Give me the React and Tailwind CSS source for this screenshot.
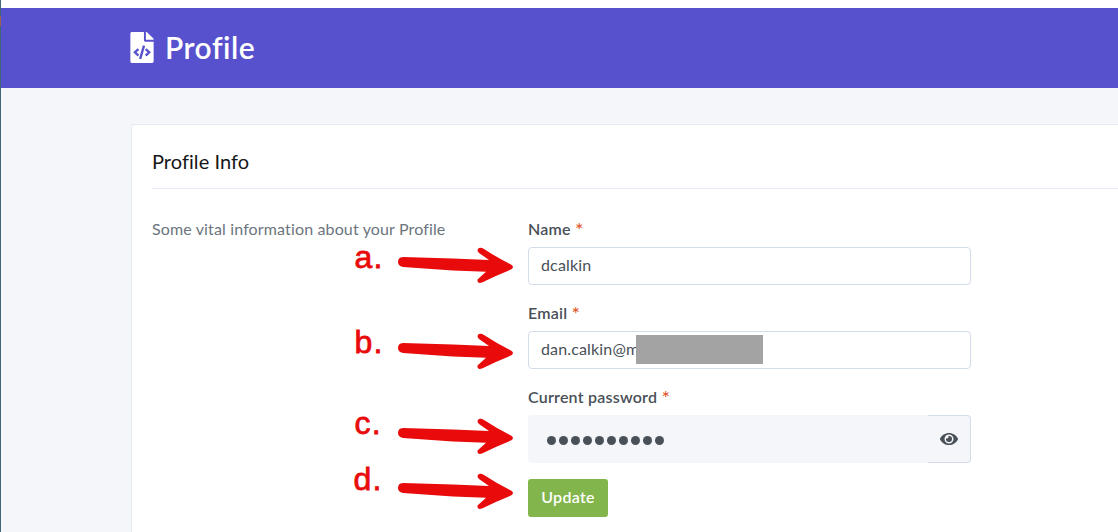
// App.jsx

import { FaEye, FaFileCode } from "react-icons/fa";

/* ================= CALLOUTS ================= */
const steps = [
  { label: "a.", x: 354.5, y: 268, tip: 267 },
  { label: "b.", x: 354.5, y: 353, tip: 353 },
  { label: "c.", x: 354.5, y: 434, tip: 438 },
  { label: "d.", x: 353.5, y: 490, tip: 493 },
];

const Callouts = () => (
  <svg
    className="absolute left-0 top-0 pointer-events-none"
    width="1118"
    height="532"
    fill="#e90b0b"
  >
    {steps.map((step) => (
      <g key={step.label}>
        <text
          x={step.x}
          y={step.y}
          stroke="#e90b0b"
          strokeWidth="0.8"
          className="font-['Liberation_Sans',sans-serif] text-[32px] tracking-[1.2px]"
        >
          {step.label}
        </text>
        <path
          transform={`translate(398 ${step.tip})`}
          d="M5 -10 L55 -8.4 L91 -7 L81 -14 Q78 -17 81 -19 Q83 -20 86 -18 Q99 -9.5 113 -2.4 Q117 0 113 2.5 Q99 8 84 15.5 Q79 17 79.5 12.5 L88 4.8 L55 3.4 L5 0 Q0 -1 0 -5 Q0 -9.8 5 -10 Z"
        />
      </g>
    ))}
  </svg>
);

/* ================= FORM FIELD ================= */
const Field = ({ label, children }) => (
  <div className="mb-4">
    <label className="block h-[30px] leading-5 font-semibold text-[#495057] tracking-[0.22px]">
      {label}{" "}
      <span className="relative top-0.5 text-xl leading-none text-[#e04f1a] font-normal">*</span>
    </label>
    {children}
  </div>
);

const inputStyle =
  "block w-full h-[38px] px-3 pb-1 rounded border border-[#d4dcec] bg-white text-[#495057] tracking-[0.15px] outline-none";

const App = () => {
  return (
    <div className="relative flex h-[532px] w-[1118px] overflow-hidden bg-[#f4f6fa] font-['Lato',sans-serif] text-base">
      <div className="w-px shrink-0 bg-[#426677]">
        <div className="mt-4 h-2.5 bg-[#9a6252]" />
      </div>

      <div className="flex-1 min-w-0">
        {/* TOP BAR */}
        <div className="h-2 bg-white" />
        <header className="flex h-20 items-center gap-[11px] bg-[#5751cd] pb-0.5 pl-[129px] text-white">
          <FaFileCode className="h-[31px] w-6" />
          <h1 className="text-[30px] leading-9 font-semibold tracking-[0.5px]">Profile</h1>
        </header>

        {/* PROFILE CARD */}
        <main className="pt-9 pl-[130px]">
          <section className="h-[420px] rounded-tl border-t border-l border-[#e4eaf2] bg-white pl-5">
            <h2 className="h-16 border-b border-[#e4eaf2] pt-[23px] text-xl leading-[26px] text-[#171717] tracking-[0.05px]">
              Profile Info
            </h2>

            <div className="flex pt-7">
              <p className="w-[376px] shrink-0 leading-6 text-[#6c757d] tracking-[0.14px]">
                Some vital information about your Profile
              </p>

              <form className="w-[443px]" onSubmit={(e) => e.preventDefault()}>
                <Field label="Name">
                  <input className={inputStyle} defaultValue="dcalkin" />
                </Field>

                <Field label="Email">
                  <div className="relative">
                    <input className={inputStyle} defaultValue="dan.calkin@m" />
                    <div className="absolute left-[108px] top-1 h-[29px] w-[127px] bg-[#a3a3a3]" />
                  </div>
                </Field>

                <Field label="Current password">
                  <div className="flex h-12 text-[#495057]">
                    <div className="flex w-[400px] items-center gap-[3px] rounded-l bg-[#f4f6fa] pl-[19px]">
                      {Array.from({ length: 10 }, (_, i) => (
                        <span key={i} className="mt-[3px] size-[9px] rounded-full bg-[#495057]" />
                      ))}
                    </div>
                    <button
                      type="button"
                      className="flex flex-1 items-center justify-center rounded-r border border-l-0 border-[#d4dcec] bg-[#f4f6fa]"
                    >
                      <FaEye className="size-[18px]" />
                    </button>
                  </div>
                </Field>

                <button
                  type="submit"
                  className="h-[38px] w-20 rounded-[3px] bg-[#82b54b] pb-0.5 font-semibold text-white tracking-[0.3px]"
                >
                  Update
                </button>
              </form>
            </div>
          </section>
        </main>
      </div>

      <Callouts />
    </div>
  );
};

export default App;
